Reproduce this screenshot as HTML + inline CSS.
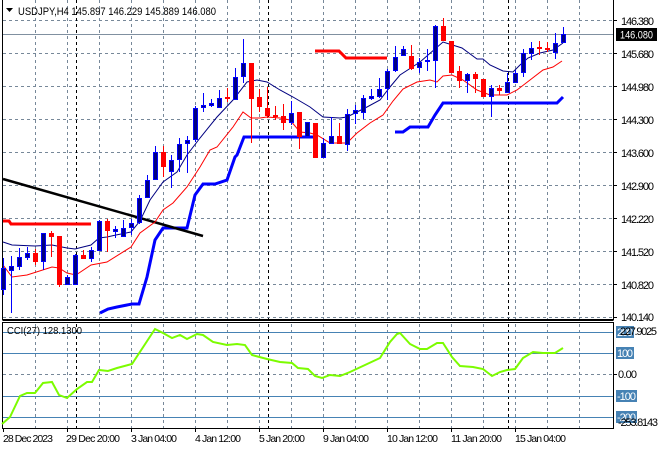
<!DOCTYPE html>
<html><head><meta charset="utf-8"><style>
html,body{margin:0;padding:0;background:#fff;}
svg{display:block;font-family:"Liberation Sans",sans-serif;}
</style></head><body>
<svg width="660" height="450" viewBox="0 0 660 450" xmlns="http://www.w3.org/2000/svg">
<rect width="660" height="450" fill="#fff"/>
<g stroke="#778899" stroke-width="1" stroke-dasharray="3,3" fill="none">
<path d="M3 20.5H613M3 53.5H613M3 86.5H613M3 119.5H613M3 152.5H613M3 185.5H613M3 218.5H613M3 251.5H613M3 284.5H613M3 317.5H613"/>
<path d="M35.5 0V319M67.5 0V319M99.5 0V319M131.5 0V319M163.5 0V319M195.5 0V319M227.5 0V319M259.5 0V319M291.5 0V319M323.5 0V319M355.5 0V319M387.5 0V319M419.5 0V319M451.5 0V319M483.5 0V319M515.5 0V319M547.5 0V319M579.5 0V319"/>
<path d="M35.5 324V428M67.5 324V428M99.5 324V428M131.5 324V428M163.5 324V428M195.5 324V428M227.5 324V428M259.5 324V428M291.5 324V428M323.5 324V428M355.5 324V428M387.5 324V428M419.5 324V428M451.5 324V428M483.5 324V428M515.5 324V428M547.5 324V428M579.5 324V428"/>
<path d="M3 374.5H613"/>
</g>
<g stroke="#000" stroke-width="1" stroke-dasharray="3,3"><path d="M76.5 0V428M268.5 0V428M508.5 0V428"/></g>
<path d="M3 34.5H613" stroke="#8090a0" stroke-width="1"/>
<g stroke="#4682b4" stroke-width="1"><path d="M3 332.5H613M3 353.5H613M3 396.5H613M3 417.5H613"/></g>
<g stroke="#000" stroke-width="1" fill="none">
<path d="M2.5 0V319.5H613.5V0"/>
<path d="M2.5 322.5H613.5V428.5H2.5Z"/>
<path d="M2.5 320.5H613.5"/>
</g>
<polyline fill="none" stroke="#ff0000" stroke-width="3" points="3,221 9,221 11,224 91,224"/>
<polyline fill="none" stroke="#ff0000" stroke-width="3" points="315,51 339,51 346,58 387,58"/>
<polyline fill="none" stroke="#0000ff" stroke-width="3" points="100,313 108,309 117,307 132,304 139,304 147,277 155,240 163,228 187,228 195,195 203,184 215,184 227,180 235,157 237,155 244,137 317,137"/>
<polyline fill="none" stroke="#0000ff" stroke-width="3" points="395,132 403,132 410,127 428,127 435,115 443,103 557,103 563,97"/>
<line x1="3" y1="179" x2="203" y2="236" stroke="#000" stroke-width="2.5"/>
<polyline fill="none" stroke="#ff0000" stroke-width="1" points="3,265 12,277 27,275 52,267 59,268 67,273 76,275 91,265 107,262 131,247 140,233 155,222 163,210 173,203 187,187 200,167 210,150 217,147 233,127 243,112 251,118 260,118 267,117 280,118 290,120 300,132 310,133 317,135 330,143 347,143 357,133 370,123 383,115 393,101 403,89 417,82 430,80 437,82 443,76 452,75 463,80 477,90 490,95 507,95 517,90 530,80 543,70 553,67 562,61"/>
<polyline fill="none" stroke="#000080" stroke-width="1" points="3,242 12,245 35,246 52,245 67,248 75,249 83,247 91,245 99,238 107,237 116,235 131,232 140,221 150,200 163,182 177,172 187,155 200,138 217,117 233,100 247,82 257,80 267,82 280,90 293,97 310,107 323,117 340,118 347,117 357,112 367,107 380,100 390,87 400,75 420,62 443,42 462,48 477,59 483,59 490,65 503,71 513,72 520,65 528,58 540,53 553,50 563,43"/>
<g stroke-width="1">
<g stroke="#0000ff" fill="#000080">
<path d="M3.5 258V295M11.5 256V313M19.5 248V270M27.5 247V260M43.5 233V270M67.5 275V285M75.5 254V285M91.5 247V262M99.5 220V251M115.5 226V238M123.5 220V237M131.5 219V235M139.5 195V224M147.5 175V198M155.5 146V180M171.5 155V188M179.5 138V172M187.5 136V173M195.5 106V142M203.5 93V112M211.5 99V107M219.5 90V108M235.5 68V100M243.5 39V83M291.5 101V125M307.5 122V137M323.5 138V158M331.5 117V144M347.5 109V151M355.5 105V124M363.5 95V119M371.5 89V100M379.5 78V98M387.5 69V100M395.5 46V72M403.5 46V56M419.5 58V73M427.5 49V71M435.5 25V88M467.5 73V93M491.5 85V117M507.5 73V93M515.5 70V83M523.5 49V77M531.5 42V60M555.5 33V59M563.5 27V43"/>
<rect x="1.5" y="268.5" width="4" height="21"/><rect x="9.5" y="266.5" width="4" height="4"/><rect x="17.5" y="257.5" width="4" height="9"/><rect x="25.5" y="253.5" width="4" height="4"/><rect x="41.5" y="233.5" width="4" height="28"/><rect x="65.5" y="277.5" width="4" height="7"/><rect x="73.5" y="255.5" width="4" height="29"/><rect x="89.5" y="250.5" width="4" height="8"/><rect x="97.5" y="221.5" width="4" height="29"/><rect x="113.5" y="229.5" width="4" height="2"/><rect x="121.5" y="228.5" width="4" height="8"/><rect x="129.5" y="223.5" width="4" height="4"/><rect x="137.5" y="198.5" width="4" height="24"/><rect x="145.5" y="180.5" width="4" height="17"/><rect x="153.5" y="152.5" width="4" height="27"/><rect x="169.5" y="160.5" width="4" height="11"/><rect x="177.5" y="144.5" width="4" height="15"/><rect x="185.5" y="140.5" width="4" height="3"/><rect x="193.5" y="108.5" width="4" height="31"/><rect x="201.5" y="105.5" width="4" height="2"/><rect x="209.5" y="103.5" width="4" height="2"/><rect x="217.5" y="98.5" width="4" height="9"/><rect x="233.5" y="77.5" width="4" height="22"/><rect x="241.5" y="63.5" width="4" height="13"/><rect x="289.5" y="113.5" width="4" height="9"/><rect x="305.5" y="122.5" width="4" height="14"/><rect x="321.5" y="143.5" width="4" height="14"/><rect x="329.5" y="136.5" width="4" height="7"/><rect x="345.5" y="114.5" width="4" height="30"/><rect x="353.5" y="110.5" width="4" height="3"/><rect x="361.5" y="98.5" width="4" height="14"/><rect x="369.5" y="96.5" width="4" height="2"/><rect x="377.5" y="89.5" width="4" height="7"/><rect x="385.5" y="71.5" width="4" height="17"/><rect x="393.5" y="57.5" width="4" height="13"/><rect x="401.5" y="49.5" width="4" height="6"/><rect x="417.5" y="62.5" width="4" height="5"/><rect x="425.5" y="60.5" width="4" height="1"/><rect x="433.5" y="26.5" width="4" height="34"/><rect x="465.5" y="74.5" width="4" height="6"/><rect x="489.5" y="88.5" width="4" height="8"/><rect x="505.5" y="82.5" width="4" height="10"/><rect x="513.5" y="73.5" width="4" height="9"/><rect x="521.5" y="53.5" width="4" height="19"/><rect x="529.5" y="48.5" width="4" height="5"/><rect x="553.5" y="43.5" width="4" height="9"/><rect x="561.5" y="34.5" width="4" height="8"/>
</g>
<g stroke="#ff0000" fill="#ff0000">
<path d="M35.5 249V265M51.5 231V257M59.5 236V287M83.5 250V259M107.5 219V252M163.5 146V177M227.5 88V102M251.5 63V143M259.5 89V112M267.5 87V118M275.5 106V120M283.5 104V130M299.5 112V149M315.5 123V158M339.5 123V144M411.5 45V70M443.5 18V41M451.5 41V73M459.5 66V88M475.5 72V93M483.5 79V97M499.5 85V95M539.5 41V55M547.5 42V52"/>
<rect x="33.5" y="253.5" width="4" height="8"/><rect x="49.5" y="233.5" width="4" height="3"/><rect x="57.5" y="236.5" width="4" height="48"/><rect x="81.5" y="255.5" width="4" height="3"/><rect x="105.5" y="221.5" width="4" height="9"/><rect x="161.5" y="152.5" width="4" height="14"/><rect x="225.5" y="97.5" width="4" height="1"/><rect x="249.5" y="63.5" width="4" height="35"/><rect x="257.5" y="97.5" width="4" height="9"/><rect x="265.5" y="108.5" width="4" height="7"/><rect x="273.5" y="115.5" width="4" height="1"/><rect x="281.5" y="116.5" width="4" height="6"/><rect x="297.5" y="112.5" width="4" height="24"/><rect x="313.5" y="123.5" width="4" height="34"/><rect x="337.5" y="136.5" width="4" height="7"/><rect x="409.5" y="56.5" width="4" height="12"/><rect x="441.5" y="26.5" width="4" height="14"/><rect x="449.5" y="41.5" width="4" height="31"/><rect x="457.5" y="71.5" width="4" height="9"/><rect x="473.5" y="74.5" width="4" height="4"/><rect x="481.5" y="79.5" width="4" height="17"/><rect x="497.5" y="88.5" width="4" height="2"/><rect x="537.5" y="47.5" width="4" height="1"/><rect x="545.5" y="48.5" width="4" height="1"/>
</g>
</g>
<polyline fill="none" stroke="#7cfc00" stroke-width="2" points="2,424 10,417 20,396 27,393 35,393 43,383 52,382 59,395 67,398 77,389 87,382 92,382 99,370 108,371 117,368 132,364 155,329 163,333 172,338 180,335 187,339 197,334 203,335 213,342 227,345 237,344 245,345 252,355 267,359 280,362 292,363 298,368 308,369 315,376 322,378 330,375 340,376 350,372 365,365 380,358 390,342 397,334 400,333 410,344 420,349 427,349 437,343 443,343 452,357 460,366 473,367 483,369 492,376 500,372 507,370 515,369 523,358 533,352 543,353 555,353 563,348"/>
<path d="M6 8h7l-3.5 4z" fill="#000"/>
<text x="18" y="15" font-size="11" fill="#000" textLength="198" lengthAdjust="spacingAndGlyphs">USDJPY,H4  145.897 146.229 145.889 146.080</text>
<text x="7" y="334" font-size="10.5" fill="#000" textLength="75" lengthAdjust="spacingAndGlyphs">CCI(27) 128.1300</text>
<g stroke="#000"><path d="M613 20.5h4M613 53.5h4M613 86.5h4M613 119.5h4M613 152.5h4M613 185.5h4M613 218.5h4M613 251.5h4M613 284.5h4M613 317.5h4M613 374.5h4"/></g>
<g font-size="11" fill="#000" lengthAdjust="spacingAndGlyphs">
<text x="621" y="25" textLength="33">146.380</text>
<text x="621" y="58" textLength="33">145.680</text>
<text x="621" y="91" textLength="33">144.980</text>
<text x="621" y="124" textLength="33">144.300</text>
<text x="621" y="157" textLength="33">143.600</text>
<text x="621" y="190" textLength="33">142.900</text>
<text x="621" y="223" textLength="33">142.220</text>
<text x="621" y="256" textLength="33">141.520</text>
<text x="621" y="289" textLength="33">140.820</text>
<text x="621" y="321" textLength="33">140.140</text>
</g>
<rect x="616" y="28" width="41" height="13" fill="#000"/>
<text x="620" y="38.5" font-size="11" fill="#fff" textLength="33" lengthAdjust="spacingAndGlyphs">146.080</text>
<g fill="#4682b4"><rect x="616" y="326" width="18" height="12"/><rect x="616" y="347" width="18" height="12"/><rect x="616" y="390" width="21" height="12"/><rect x="616" y="411" width="21" height="12"/></g>
<g font-size="11" lengthAdjust="spacingAndGlyphs">
<text x="617" y="336" fill="#fff" textLength="16">200</text>
<text x="620" y="335" fill="#000" textLength="37">227.9025</text>
<text x="617" y="357" fill="#fff" textLength="16">100</text>
<text x="618" y="378" fill="#000" textLength="19">0.00</text>
<text x="617" y="400" fill="#fff" textLength="19">-100</text>
<text x="617" y="421" fill="#fff" textLength="19">-200</text>
<text x="618" y="426" fill="#000" textLength="40">-253.8143</text>
</g>
<g stroke="#000"><path d="M3.5 428v4M67.5 428v4M131.5 428v4M195.5 428v4M259.5 428v4M323.5 428v4M387.5 428v4M451.5 428v4M515.5 428v4"/></g>
<g font-size="10.5" fill="#000" lengthAdjust="spacingAndGlyphs">
<text x="3" y="442" textLength="50">28 Dec 2023</text>
<text x="66" y="442" textLength="54">29 Dec 20:00</text>
<text x="131" y="442" textLength="46">3 Jan 04:00</text>
<text x="195" y="442" textLength="46">4 Jan 12:00</text>
<text x="259" y="442" textLength="46">5 Jan 20:00</text>
<text x="323" y="442" textLength="46">9 Jan 04:00</text>
<text x="387" y="442" textLength="51">10 Jan 12:00</text>
<text x="451" y="442" textLength="51">11 Jan 20:00</text>
<text x="515" y="442" textLength="51">15 Jan 04:00</text>
</g>
</svg>
</body></html>
